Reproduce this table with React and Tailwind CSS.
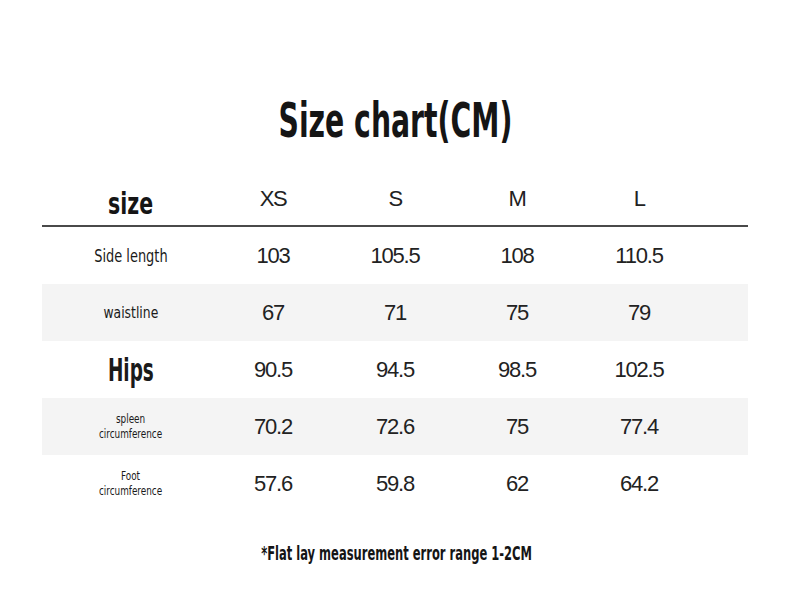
const rows = [
  { label: 'Side length', cls: 'text-[18px]', sx: 'scale-x-[0.8]', values: ['103', '105.5', '108', '110.5'] },
  { label: 'waistline', cls: 'text-[16px]', sx: 'scale-x-[0.86]', values: ['67', '71', '75', '79'], shaded: true },
  { label: 'Hips', cls: 'text-[32px] font-bold', sx: 'scale-x-[0.64]', values: ['90.5', '94.5', '98.5', '102.5'] },
  { label: ['spleen', 'circumference'], cls: 'text-[12px] leading-[15px]', sx: 'scale-x-[0.82]', values: ['70.2', '72.6', '75', '77.4'], shaded: true },
  { label: ['Foot', 'circumference'], cls: 'text-[12px] leading-[15px]', sx: 'scale-x-[0.82]', values: ['57.6', '59.8', '62', '64.2'] },
];

const condensed = "font-['DejaVu_Sans_Condensed','DejaVu_Sans',sans-serif]";

function Cond({ sx, children }) {
  return <span className={`inline-block origin-center ${sx}`}>{children}</span>;
}

export default function App() {
  return (
    <div className="w-[790px] h-[607px] bg-white text-[#151515] font-['Liberation_Sans',sans-serif] pt-[92px]">
      <h1 className={`${condensed} text-center text-[48px] font-bold leading-[56px]`}>
        <Cond sx="scale-x-[0.655]">Size chart(CM)</Cond>
      </h1>

      <div className="mx-[42px] mt-[30px]">
        {/* header */}
        <div className="flex h-[49px] items-end border-b-2 border-[#4a4a4a]">
          <div className={`${condensed} w-[170px] pl-2 text-center text-[30px] font-bold leading-[40px] pb-[1px]`}>
            <Cond sx="scale-x-[0.76]">size</Cond>
          </div>
          {['XS', 'S', 'M', 'L'].map(s => (
            <div key={s} className="w-[122px] self-start pt-[4px] text-center text-[22px] tracking-[-1.5px] text-[#222]">{s}</div>
          ))}
        </div>

        {rows.map((r, i) => (
          <div key={i} className={`flex h-[57px] items-center ${r.shaded ? 'bg-[#f4f4f4]' : ''}`}>
            <div className={`${condensed} ${r.cls} w-[170px] pl-2 text-center text-[#1a1a1a]`}>
              <Cond sx={r.sx}>
                {Array.isArray(r.label) ? r.label.map(l => <div key={l}>{l}</div>) : r.label}
              </Cond>
            </div>
            {r.values.map((v, j) => (
              <div key={j} className="w-[122px] text-center text-[22px] tracking-[-1.2px] text-[#222]">{v}</div>
            ))}
          </div>
        ))}
      </div>

      <p className={`${condensed} mt-[26px] pl-[4px] text-center text-[20px] font-bold`}>
        <Cond sx="scale-x-[0.64]">*Flat lay measurement error range 1-2CM</Cond>
      </p>
    </div>
  );
}
